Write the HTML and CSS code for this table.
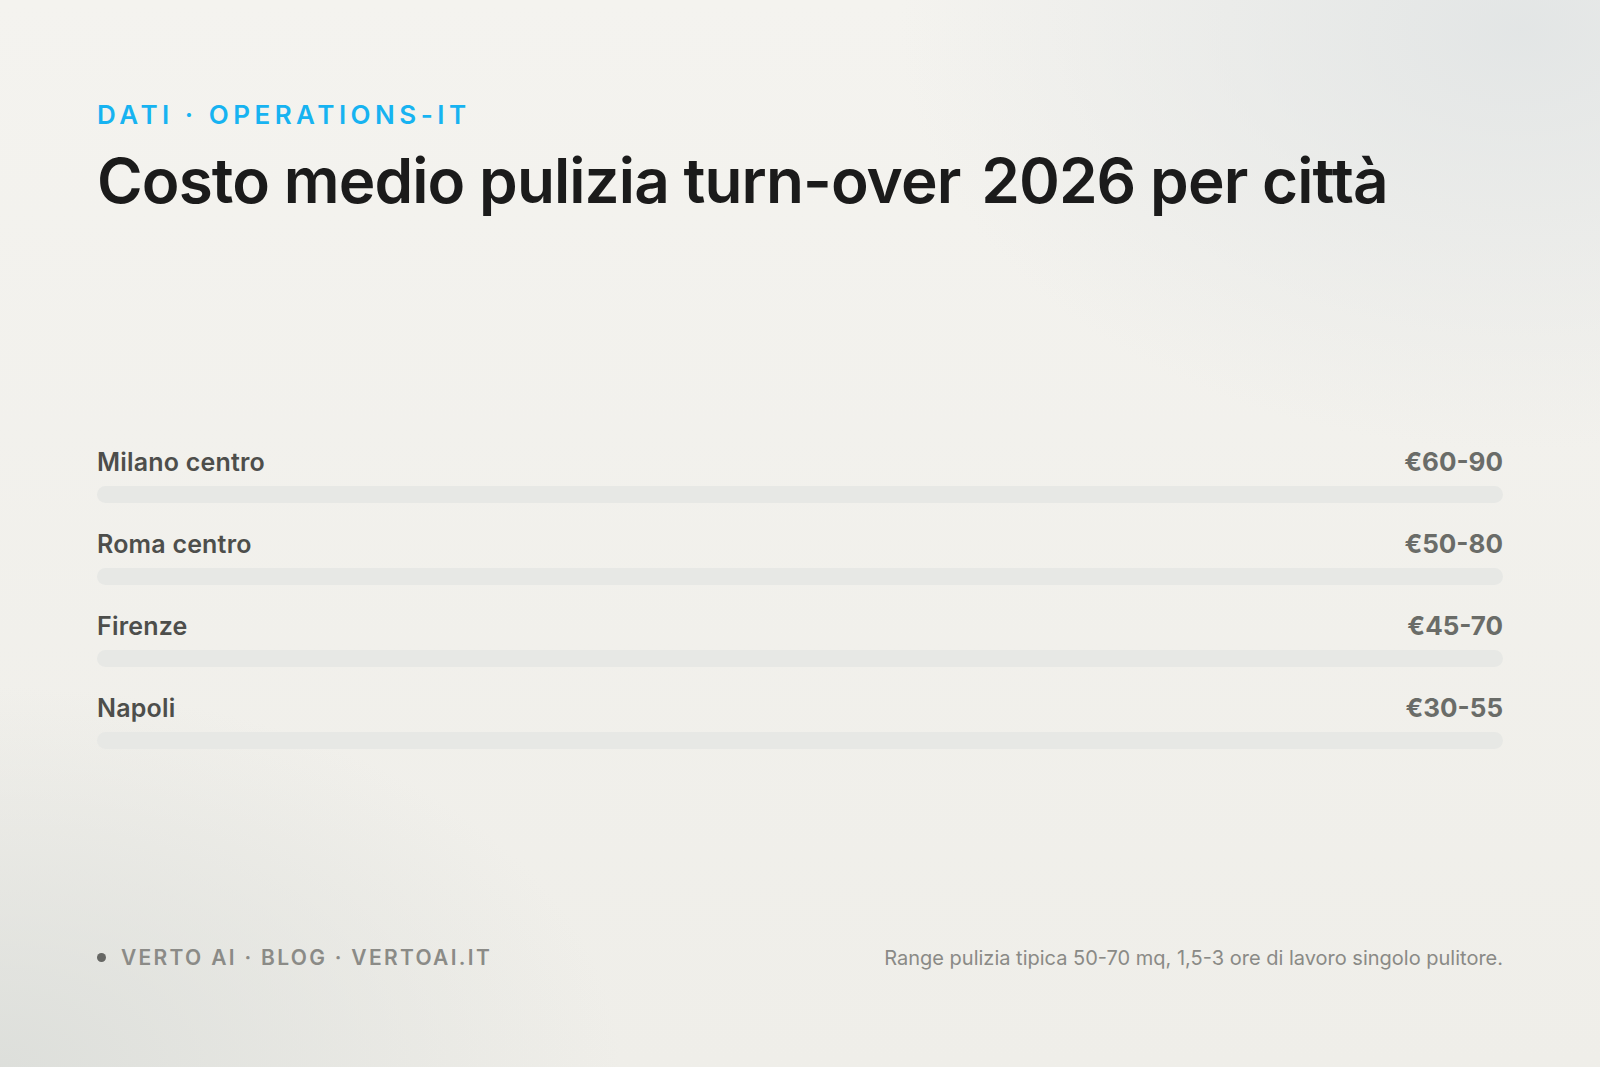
FILE: index.html
```html
<!DOCTYPE html>
<html lang="it">
<head>
<meta charset="utf-8">
<title>Costo medio pulizia turn-over 2026 per città</title>
<link rel="stylesheet" href="styles.css">
</head>
<body>
<main class="card">
  <header class="head">
    <div class="eyebrow">DATI · OPERATIONS-IT</div>
    <h1 class="title">Costo medio pulizia turn-over <span class="year">2026</span> per città</h1>
  </header>
  <section class="chart">
    <div class="row">
      <div class="row-top"><span class="label">Milano centro</span><span class="value">€60-90</span></div>
      <div class="bar"></div>
    </div>
    <div class="row">
      <div class="row-top"><span class="label">Roma centro</span><span class="value">€50-80</span></div>
      <div class="bar"></div>
    </div>
    <div class="row">
      <div class="row-top"><span class="label">Firenze</span><span class="value">€45-70</span></div>
      <div class="bar"></div>
    </div>
    <div class="row">
      <div class="row-top"><span class="label">Napoli</span><span class="value">€30-55</span></div>
      <div class="bar"></div>
    </div>
  </section>
  <footer class="foot">
    <div class="brand"><span class="dot"></span>VERTO AI · BLOG · VERTOAI.IT</div>
    <div class="note">Range pulizia tipica 50-70 mq, 1,5-3 ore di lavoro singolo pulitore.</div>
  </footer>
</main>
</body>
</html>
```
FILE: styles.css
```css
html, body {
  margin: 0;
  padding: 0;
}
body {
  width: 1600px;
  height: 1067px;
  overflow: hidden;
  font-family: Inter, "Liberation Sans", sans-serif;
  background-color: #f2f1ed;
  background-image:
    radial-gradient(ellipse 620px 420px at 1520px 30px, rgba(226,229,229,0.95), rgba(226,229,229,0) 100%),
    radial-gradient(ellipse 620px 380px at 0px 1067px, rgba(220,222,218,0.95), rgba(220,222,218,0) 100%),
    linear-gradient(180deg, #f4f3ef 0%, #efeee9 100%);
}
.card {
  box-sizing: border-box;
  width: 1600px;
  height: 1067px;
  padding: 99px 97px 0 97px;
  display: flex;
  flex-direction: column;
}
.eyebrow {
  color: #17b3f1;
  font-size: 26px;
  font-weight: 600;
  letter-spacing: 4.5px;
  line-height: 32px;
}
.title {
  margin: 12px 0 0 0;
  color: #1b1b1b;
  font-size: 62px;
  font-weight: 600;
  letter-spacing: -0.9px;
  line-height: 76px;
}
.year {
  margin-left: 6px;
}
.chart {
  margin-top: 227px;
  display: flex;
  flex-direction: column;
  gap: 25px;
}
.row {
  display: flex;
  flex-direction: column;
  gap: 8px;
}
.row-top {
  display: flex;
  justify-content: space-between;
  align-items: baseline;
  line-height: 32px;
}
.label {
  color: #4d4e4b;
  font-size: 25px;
  font-weight: 600;
  letter-spacing: 0.2px;
}
.value {
  color: #6a6c68;
  font-size: 26px;
  font-weight: 700;
}
.bar {
  height: 17px;
  border-radius: 9px;
  background: #e7e8e5;
}
.foot {
  margin-top: auto;
  margin-bottom: 97px;
  display: flex;
  justify-content: space-between;
  align-items: center;
}
.brand {
  display: flex;
  align-items: center;
  color: #8b8b87;
  font-size: 21px;
  font-weight: 600;
  letter-spacing: 2.3px;
}
.dot {
  width: 9px;
  height: 9px;
  border-radius: 50%;
  background: #666764;
  margin-right: 15px;
}
.note {
  color: #8a8a86;
  font-size: 20px;
  font-weight: 400;
  letter-spacing: 0px;
}
```
